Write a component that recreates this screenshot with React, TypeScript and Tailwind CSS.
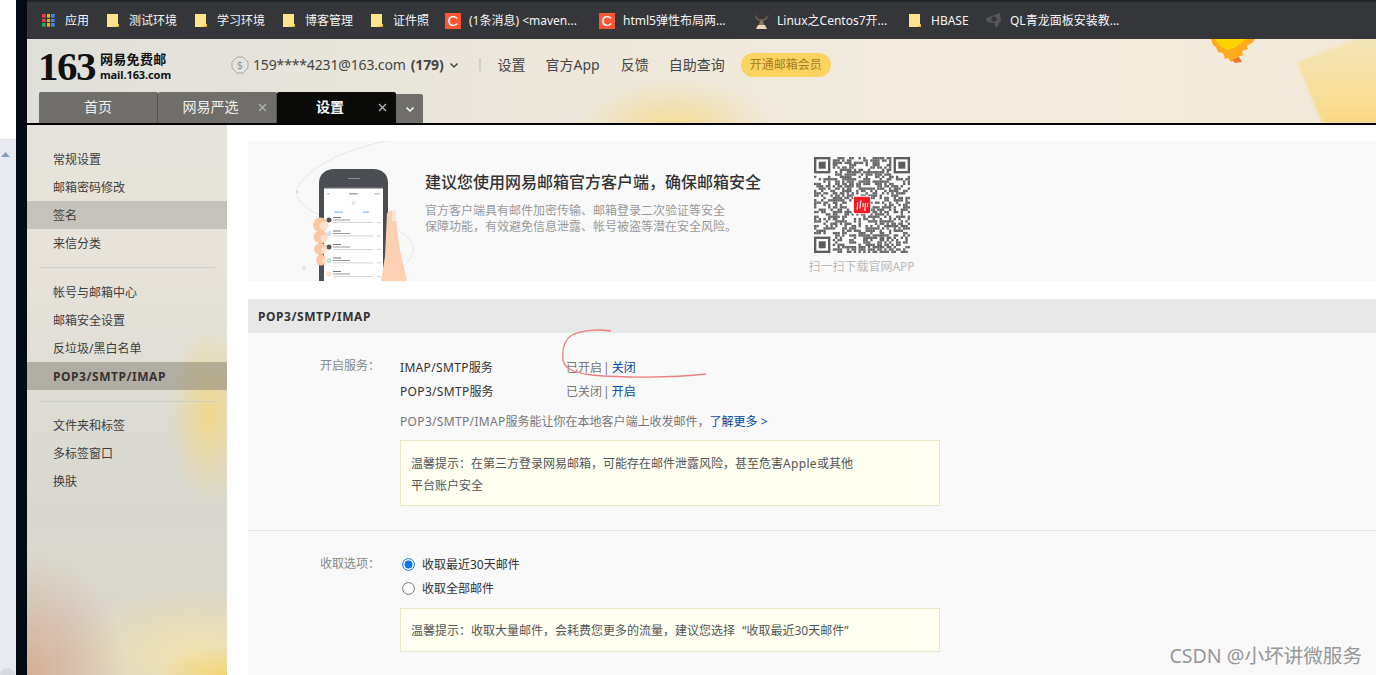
import React from "react";

function Folder() {
  return (
    <svg width="12" height="14" viewBox="0 0 12 14" className="shrink-0">
      <path d="M0 0H11V10L12 13H0Z" fill="#fde48c" />
      <path d="M9 13H12V10H11V12H9Z" fill="#e8b93c" />
    </svg>
  );
}

function CIcon() {
  return (
    <div className="w-4 h-4 bg-[#fc5531] flex items-center justify-center text-white text-[15px] leading-4 font-['Liberation_Sans',sans-serif] shrink-0">
      C
    </div>
  );
}

function Goat() {
  return (
    <svg width="17" height="16" viewBox="0 0 17 16" className="shrink-0">
      <path d="M1 1L6 6H11L16 1L14 6L11 8H6L3 6Z" fill="#6a5a50" />
      <path d="M7 8H10L11 12H6Z" fill="#8a7868" />
      <path d="M5 12H12L14 16H3Z" fill="#ecd8b8" />
    </svg>
  );
}

function QL() {
  return (
    <svg width="17" height="16" viewBox="0 0 17 16" className="shrink-0">
      <path d="M1 5L15 0L16 8L11 15L9 10L2 9Z" fill="#55565a" />
      <circle cx="9" cy="6" r="2.5" fill="#35363a" />
    </svg>
  );
}

function Apps() {
  const colors = ["#e8453c", "#f4b400", "#4285f4", "#e8453c", "#f4b400", "#4285f4", "#34a853", "#f4b400", "#4285f4"];
  return (
    <div className="grid grid-cols-3 gap-[1px] w-[13px] h-[13px] shrink-0">
      {colors.map((c, i) => (
        <svg key={i} width="3.67" height="3.67" viewBox="0 0 4 4">
          <rect width="4" height="4" fill={c} />
        </svg>
      ))}
    </div>
  );
}

function BookmarkBar() {
  return (
    <div className="h-[39px] shrink-0 bg-[#35363a] border-t-2 border-[#232428] flex items-center pl-[15px] text-[12px] text-[#f4f5f6] whitespace-nowrap">
      <div className="flex items-center gap-[10px] w-[65px]"><Apps /><span>应用</span></div>
      <div className="flex items-center gap-[10px] w-[88px]"><Folder /><span>测试环境</span></div>
      <div className="flex items-center gap-[10px] w-[88px]"><Folder /><span>学习环境</span></div>
      <div className="flex items-center gap-[10px] w-[88px]"><Folder /><span>博客管理</span></div>
      <div className="flex items-center gap-[10px] w-[74px]"><Folder /><span>证件照</span></div>
      <div className="flex items-center gap-2 w-[154px]"><CIcon /><span>(1条消息) &lt;maven...</span></div>
      <div className="flex items-center gap-2 w-[154px]"><CIcon /><span>html5弹性布局两...</span></div>
      <div className="flex items-center gap-[7px] w-[156px]"><Goat /><span>Linux之Centos7开...</span></div>
      <div className="flex items-center gap-[10px] w-[76px]"><Folder /><span>HBASE</span></div>
      <div className="flex items-center gap-2"><QL /><span>QL青龙面板安装教...</span></div>
    </div>
  );
}

function Coin() {
  return (
    <svg width="18" height="18" viewBox="0 0 18 18" className="shrink-0">
      <path d="M6 1H12L17 6V12L12 17H6L1 12V6Z" fill="none" stroke="#a8a8a4" strokeWidth="1" />
      <text x="9" y="13" textAnchor="middle" fontSize="11" fill="#999">$</text>
    </svg>
  );
}

function Chevron({ color = "#444", size = 10 }: { color?: string; size?: number }) {
  return (
    <svg width={size} height={size} viewBox="0 0 10 10" className="shrink-0">
      <path d="M1.5 3.5L5 7L8.5 3.5" fill="none" stroke={color} strokeWidth="1.5" />
    </svg>
  );
}

function Tab({ label, close, active }: { label: string; close?: boolean; active?: boolean }) {
  return (
    <div
      className={
        active
          ? "relative w-[119px] h-[31px] pb-[2px] bg-[#0a0a08] text-white font-bold text-[14px] rounded-t-[2px] flex items-center justify-center"
          : "relative w-[119px] h-[31px] pb-[2px] bg-[#6f6e6a] text-[#f0f0ee] text-[14px] rounded-t-[2px] border-r border-[#55554f] flex items-center justify-center"
      }
    >
      <span className={close ? "mr-[13px]" : ""}>{label}</span>
      {close && (
        <svg width="9" height="9" viewBox="0 0 9 9" className="absolute right-[9px] top-[11px]">
          <path d="M1 1L8 8M8 1L1 8" stroke="#b4b4b0" strokeWidth="1.3" />
        </svg>
      )}
    </div>
  );
}

function Header() {
  return (
    <div className="relative h-[84px] shrink-0 overflow-hidden bg-[radial-gradient(ellipse_95px_48px_at_648px_88px,#f3dc94_0%,rgba(243,220,148,0)_100%),linear-gradient(90deg,#dfdfd9_0%,#e8e5dc_25%,#eee8da_45%,#f3ecdf_70%,#f2e9d8_100%)] flex flex-col">
      <svg width="46" height="30" viewBox="0 0 46 30" className="absolute left-[1183px] top-0">
        <path d="M1 0L3 6L6 8L8 13L13 14L15 20L18 19L21 23L24 21L29 23L28 18L33 16L32 12L38 10L37 7L43 3L45 0Z" fill="#fbab1c" />
        <path d="M5 0L10 7L18 11L26 8L36 0Z" fill="#fdd400" />
        <path d="M22 21L29 18L32 23L25 24Z" fill="#f2742a" />
      </svg>
      <svg width="111" height="84" viewBox="0 0 111 84" className="absolute left-[1265px] top-0 blur-[1px]">
        <defs>
          <linearGradient id="paper" x1="0" y1="0" x2="0" y2="1">
            <stop offset="0" stopColor="#f5e4a8" stopOpacity="0.7" />
            <stop offset="1" stopColor="#f8d884" stopOpacity="1" />
          </linearGradient>
        </defs>
        <path d="M5 23L65 0H111V84H30Z" fill="url(#paper)" />
      </svg>
      <div className="flex items-center pl-3 h-[53px] pb-[2px] text-[#444]">
        <div className="flex items-center w-[192px] mt-[3px]">
          <span className="-ml-[1px] font-['Liberation_Serif',serif] font-bold text-[41px] leading-[40px] tracking-[-1.5px] text-[#111]">163</span>
          <div className="flex flex-col ml-[5px] text-[#111] font-bold">
            <span className="text-[13px] leading-[17px] tracking-[0.3px]">网易免费邮</span>
            <span className="text-[11px] leading-[14px] tracking-[-0.1px]">mail.163.com</span>
          </div>
        </div>
        <Coin />
        <span className="ml-[4px] text-[14px] tracking-[-0.15px]">159****4231@163.com</span>
        <span className="ml-[5px] text-[14px] font-bold tracking-[-0.15px]">(179)</span>
        <span className="ml-[5px]"><Chevron /></span>
        <div className="ml-5 w-[2px] h-[13px] bg-[#d0cfc8]" />
        <div className="ml-[17px] flex items-center gap-5 text-[14px]">
          <span>设置</span>
          <span className="mr-[1px]">官方App</span>
          <span>反馈</span>
          <span>自助查询</span>
        </div>
        <div className="ml-4 w-[90px] h-6 rounded-full bg-[#fad361] text-[#a67c20] text-[12px] flex items-center justify-center">开通邮箱会员</div>
      </div>
      <div className="flex items-end pl-3">
        <Tab label="首页" />
        <Tab label="网易严选" close />
        <Tab label="设置" close active />
        <div className="w-[27px] h-[29px] bg-[#6f6e6a] rounded-tr-[2px] flex items-center justify-center">
          <Chevron color="#fff" />
        </div>
      </div>
    </div>
  );
}

function SideItem({ label, cls }: { label: string; cls?: string }) {
  return <div className={"h-7 pl-[26px] pt-[2px] flex items-center text-[12px] text-[#3d3d3d] " + (cls || "")}>{label}</div>;
}

function Sidebar() {
  return (
    <div className="w-[200px] shrink-0 h-[550px] pt-5 flex flex-col bg-[radial-gradient(ellipse_70px_28px_at_200px_550px,#f2d672_0%,rgba(242,214,114,0)_100%),radial-gradient(ellipse_100px_120px_at_0px_550px,#d3ae93_0%,rgba(211,174,147,0)_100%),radial-gradient(ellipse_130px_70px_at_170px_530px,#f0e2ad_0%,rgba(240,226,173,0)_100%),radial-gradient(ellipse_42px_90px_at_182px_290px,#eed88c_0%,rgba(238,216,140,0)_100%),linear-gradient(180deg,#e5e3dc_0%,#e8e3da_25%,#dcdcd5_50%,#d8d7cf_70%,#dcd6cb_100%)]">
      <SideItem label="常规设置" />
      <SideItem label="邮箱密码修改" />
      <SideItem label="签名" cls="bg-[#c5c2bb]" />
      <SideItem label="来信分类" />
      <div className="mx-3 mt-[10px] mb-[10px] h-px bg-[#cbcbc8]" />
      <SideItem label="帐号与邮箱中心" />
      <SideItem label="邮箱安全设置" />
      <SideItem label="反垃圾/黑白名单" />
      <SideItem label="POP3/SMTP/IMAP" cls="bg-[rgba(120,115,105,0.45)] font-bold tracking-[0.55px] !text-[#3a3230]" />
      <div className="mx-3 mt-[11px] mb-[9px] h-px bg-[#cbcbc8]" />
      <SideItem label="文件夹和标签" />
      <SideItem label="多标签窗口" />
      <SideItem label="换肤" />
    </div>
  );
}

function Phone() {
  return (
    <svg width="155" height="140" viewBox="0 0 155 140" className="shrink-0">
      <path d="M116 0C75 8 30 30 27 50C26 60 36 68 50 74" fill="none" stroke="#e6e6e6" />
      <path d="M128 89C138 95 144 102 143 110C141 118 136 124 130 128" fill="none" stroke="#e6e6e6" />
      <circle cx="27" cy="51" r="1" fill="#cfcfcf" />
      <circle cx="34" cy="127" r="2" fill="#e2e2e2" />
      <path d="M49 140V42C49 33 56 28 64 28H103C112 28 118 33 118 42V140Z" fill="#4a4d52" />
      <rect x="78" y="37" width="12" height="1" fill="#8a8c90" />
      <rect x="54" y="46" width="59" height="94" fill="#fff" />
      <rect x="54" y="46" width="59" height="1.5" fill="#666" />
      <rect x="79" y="52" width="9" height="1.5" fill="#aaa" />
      <rect x="57" y="52" width="3" height="1.5" fill="#ccc" />
      <rect x="104" y="52" width="6" height="1.5" fill="#ccc" />
      <circle cx="83.5" cy="62" r="2" fill="#dde6f5" />
      <rect x="64" y="70.5" width="9" height="1.2" fill="#8db8f0" />
      <rect x="93" y="70.5" width="6" height="1.2" fill="#8db8f0" />
      {[0, 1, 2, 3, 4].map((i) => (
        <g key={i}>
          <circle cx="59" cy={79 + i * 13.5} r="2.5" fill={i === 3 ? "#bfe6c8" : i === 1 ? "#cfe2f5" : i === 4 ? "#f8e4c4" : "#555"} />
          <rect x="63" y={76 + i * 13.5} width="8" height="1" fill="#777" />
          <rect x="63" y={78.5 + i * 13.5} width="17" height="1" fill="#999" />
          <rect x="63" y={81 + i * 13.5} width="40" height="0.8" fill="#ccc" />
          <rect x="107" y={81 + i * 13.5} width="4" height="0.8" fill="#ccc" />
        </g>
      ))}
      <path d="M117 72L122 69H125L130 110L137 140H111L115 115Z" fill="#fdd0b1" />
      <path d="M122 69H125L126 80H122Z" fill="#fbe5d6" />
      {[
        [50.5, 84, 7.5, 7.5],
        [50.5, 96, 7, 6.5],
        [50.5, 108, 6.5, 6],
        [51, 119, 5, 5.5],
      ].map(([cx, cy, rx, ry], i) => (
        <g key={i}>
          <ellipse cx={cx} cy={cy} rx={rx} ry={ry} fill="#fcc8a4" />
          <circle cx={cx + 3.5} cy={cy + 1} r={ry - 3} fill="#fde2d0" />
        </g>
      ))}
    </svg>
  );
}

function QR() {
  const n = 41;
  const cells: React.ReactElement[] = [];
  let s = 7654321;
  const inFinder = (x: number, y: number) =>
    (x < 8 && y < 8) || (x >= n - 8 && y < 8) || (x < 8 && y >= n - 8);
  for (let y = 0; y < n; y++) {
    for (let x = 0; x < n; x++) {
      s = (Math.imul(s, 1103515245) + 12345) & 0x7fffffff;
      if (!inFinder(x, y) && (s >> 16) % 100 < 50) {
        cells.push(<rect key={x + "-" + y} x={x} y={y} width="1.02" height="1.02" />);
      }
    }
  }
  const Finder = ({ x, y }: { x: number; y: number }) => (
    <g>
      <rect x={x + 0.5} y={y + 0.5} width="6" height="6" fill="none" stroke="#5c5c5c" strokeWidth="1" />
      <rect x={x + 2} y={y + 2} width="3" height="3" fill="#5c5c5c" />
    </g>
  );
  return (
    <svg width="96" height="96" viewBox="0 0 41 41" className="shrink-0">
      <rect width="41" height="41" fill="#fff" />
      <g fill="#666">{cells}</g>
      <Finder x={0} y={0} />
      <Finder x={34} y={0} />
      <Finder x={0} y={34} />
      <rect x="16.6" y="16.6" width="7.8" height="7.8" fill="#fff" />
      <rect x="17" y="17" width="7" height="7" rx="0.6" fill="#ee1c25" />
      <path d="M18.4 22.5L18.7 19.4M19.6 22L20 18.6M20.9 21.4L21 19.6M21.7 23L22 19.6M22.8 21.4L22.9 19.6" stroke="#fff" strokeWidth="0.45" fill="none" />
    </svg>
  );
}

function Radio({ checked }: { checked?: boolean }) {
  return (
    <svg width="13" height="13" viewBox="0 0 13 13" className="shrink-0 mb-[2px]">
      <circle cx="6.5" cy="6.5" r="5.9" fill="#fff" stroke={checked ? "#0b75f0" : "#767676"} strokeWidth="1" />
      {checked && <circle cx="6.5" cy="6.5" r="4" fill="#0b75f0" />}
    </svg>
  );
}

function Status({ state, action }: { state: string; action: string }) {
  return (
    <span className="flex items-center text-[#777]">
      {state}
      <span className="ml-[1px] mr-[2px] text-[#777]">|</span>
      <span className="text-[#00479d]">{action}</span>
    </span>
  );
}

function Main() {
  return (
    <div className="relative flex-1 min-w-0 bg-white pl-[21px] pt-4 h-[550px] overflow-hidden">
      <div className="h-[140px] bg-[#f9f9f9] flex pl-[22px]">
        <Phone />
        <div className="w-[383px] pt-[31px]">
          <div className="text-[16px] leading-[20px] font-medium text-[#333]">建议您使用网易邮箱官方客户端，确保邮箱安全</div>
          <div className="mt-[11px] text-[12px] leading-4 text-[#999]">
            <div>官方客户端具有邮件加密传输、邮箱登录二次验证等安全</div>
            <div>保障功能，有效避免信息泄露、帐号被盗等潜在安全风险。</div>
          </div>
        </div>
        <div className="w-[107px] pt-4 flex flex-col items-center">
          <QR />
          <div className="mt-[6px] text-[12px] leading-4 text-[#bbb] whitespace-nowrap">扫一扫下载官网APP</div>
        </div>
      </div>
      <div className="mt-[18px] h-[34px] bg-[#e8e8e8] pl-[10px] pt-[2px] flex items-center text-[12px] font-bold tracking-[0.55px] text-[#333]">POP3/SMTP/IMAP</div>
      <div className="bg-[#f9f9f9] h-[400px] text-[12px]">
        <div className="flex pt-[22px] h-[198px] border-b border-[#e8e8e8]">
          <div className="w-[152px] pr-5 pt-[1px] text-right text-[#888] leading-5">开启服务：</div>
          <div className="flex flex-col">
            <div className="flex h-6 items-center -mt-[1px] pt-[3px]">
              <span className="w-[166px] text-[#333]"><span className="tracking-[0.33px]">IMAP/SMTP</span>服务</span>
              <Status state="已开启" action="关闭" />
            </div>
            <div className="flex h-6 items-center pt-[3px]">
              <span className="w-[166px] text-[#333]"><span className="tracking-[0.33px]">POP3/SMTP</span>服务</span>
              <Status state="已关闭" action="开启" />
            </div>
            <div className="mt-2 h-6 flex items-center text-[#777] whitespace-pre">
              <span className="tracking-[0.33px]">POP3/SMTP/IMAP</span>服务能让你在本地客户端上收发邮件，<span className="text-[#00479d]">了解更多 &gt;</span>
            </div>
            <div className="mt-[6px] w-[540px] h-[66px] bg-[#fefff0] border border-[#e8e8c8] pl-[10px] pt-3 leading-[22px] text-[#555]">
              <div>温馨提示：在第三方登录网易邮箱，可能存在邮件泄露风险，甚至危害<span className="tracking-[0.33px]">Apple</span>或其他</div>
              <div>平台账户安全</div>
            </div>
          </div>
        </div>
        <div className="flex pt-[22px]">
          <div className="w-[152px] pr-5 pt-[1px] text-right text-[#888] leading-5">收取选项：</div>
          <div className="flex flex-col">
            <div className="flex items-center h-6 pl-[2px] gap-[7px] text-[#333]"><Radio checked /><span>收取最近30天邮件</span></div>
            <div className="flex items-center h-6 pl-[2px] gap-[7px] text-[#333]"><Radio /><span>收取全部邮件</span></div>
            <div className="mt-[7px] w-[540px] h-[44px] bg-[#fefff0] border border-[#e8e8c8] pl-[10px] pt-[2px] flex items-center text-[#555] whitespace-pre">
              温馨提示：收取大量邮件，会耗费您更多的流量，建议您选择<span className="ml-[4px]"> “收取最近30天邮件”</span>
            </div>
          </div>
        </div>
      </div>
      <svg width="160" height="60" viewBox="0 0 160 60" className="absolute left-[335px] top-[203px] pointer-events-none">
        <path d="M49 3C36 1 20 2 10 7C2 12 0 22 1 32C3 42 14 45 30 47C60 50 110 50 144 46" fill="none" stroke="#ee7f7f" strokeWidth="1.3" />
      </svg>
      <div className="absolute right-[14px] bottom-[5px] text-[19.6px] leading-7 text-[#979797] whitespace-nowrap">CSDN @小坏讲微服务</div>
    </div>
  );
}

export default function App() {
  return (
    <div className="w-[1376px] h-[675px] overflow-hidden flex bg-white font-['Noto_Sans','Noto_Sans_CJK_SC',sans-serif]">
      <div className="w-4 shrink-0 flex flex-col">
        <div className="h-[140px] bg-white border-b border-[#e4e4e8]" />
        <div className="relative flex-1 bg-[#e8eaef] pt-[12px] pl-[1px]">
          <svg width="9" height="6" viewBox="0 0 9 6"><path d="M4.5 0L9 5H0Z" fill="#8a9bb8" /></svg>
          <div className="absolute left-0 bottom-[-8px] w-[15px] h-[15px] rounded-full bg-[#d9dbe0]" />
        </div>
      </div>
      <div className="w-[11px] shrink-0 bg-[#020a16]" />
      <div className="flex-1 min-w-0 flex flex-col">
        <BookmarkBar />
        <Header />
        <div className="h-[2px] shrink-0 bg-black" />
        <div className="flex flex-1 min-h-0">
          <Sidebar />
          <Main />
        </div>
      </div>
    </div>
  );
}
